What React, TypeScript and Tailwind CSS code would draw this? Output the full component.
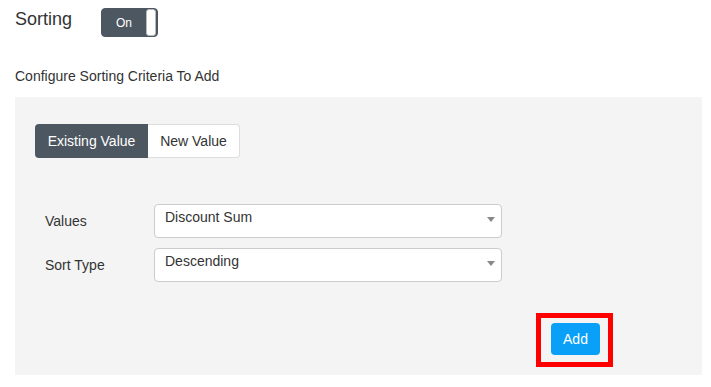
import React from "react";

function Caret() {
  return (
    <svg width="8" height="5" viewBox="0 0 8 5" className="shrink-0">
      <path d="M0 0 L8 0 L4 5 Z" fill="#888888" />
    </svg>
  );
}

function SelectBox({ value }: { value: string }) {
  return (
    <div className="flex h-[34px] w-[348px] items-start justify-between rounded-[4px] border border-[#cccccc] bg-white pl-[10px] pr-[6px] pt-[2px]">
      <span className="text-[14px] leading-[20px] text-[#333333]">{value}</span>
      <div className="pt-[10px]">
        <Caret />
      </div>
    </div>
  );
}

export default function App() {
  return (
    <div
      className="w-[711px] h-[387px] bg-white px-[15px] pt-[8px] text-[#333333]"
      style={{ fontFamily: '"Liberation Sans", Arial, sans-serif' }}
    >
      <div className="flex items-center">
        <div className="w-[86px] text-[18px] leading-[24px] text-[#333333] -mt-[8px]">Sorting</div>
        <div className="flex h-[29px] w-[57px] overflow-hidden rounded-[4px] border border-[#4d5761] bg-[#4d5761]">
          <div className="flex w-[44px] items-center justify-center text-[12px] text-white">On</div>
          <div className="w-[10px] rounded-[3px] border border-[#bbbbbb] bg-white" />
        </div>
      </div>

      <div className="mt-[29px] text-[14px] leading-[20px] text-[#333333]">
        Configure Sorting Criteria To Add
      </div>

      <div className="mt-[11px] h-[278px] w-[687px] bg-[#f4f4f4] pl-[20px] pt-[27px]">
        <div className="flex h-[34px]">
          <div className="flex w-[113px] items-center justify-center rounded-l-[4px] bg-[#4d5761] text-[14px] text-white">
            Existing Value
          </div>
          <div className="flex w-[92px] items-center justify-center rounded-r-[4px] border border-l-0 border-[#dddddd] bg-white text-[14px] text-[#333333]">
            New Value
          </div>
        </div>

        <div className="mt-[46px] flex flex-col gap-[10px] pl-[10px]">
          <div className="flex items-center">
            <div className="w-[109px] text-[14px] text-[#333333]">Values</div>
            <SelectBox value="Discount Sum" />
          </div>
          <div className="flex items-center">
            <div className="w-[109px] text-[14px] text-[#333333]">Sort Type</div>
            <SelectBox value="Descending" />
          </div>
        </div>

        <div className="mt-[31px] flex justify-end pr-[89px]">
          <div className="border-[5px] border-[#ff0000] pl-[10px] pr-[8px] pt-[5px] pb-[7px]">
            <button className="h-[32px] w-[49px] rounded-[4px] bg-[#0aa0f8] text-[14px] text-white">
              Add
            </button>
          </div>
        </div>
      </div>
    </div>
  );
}
